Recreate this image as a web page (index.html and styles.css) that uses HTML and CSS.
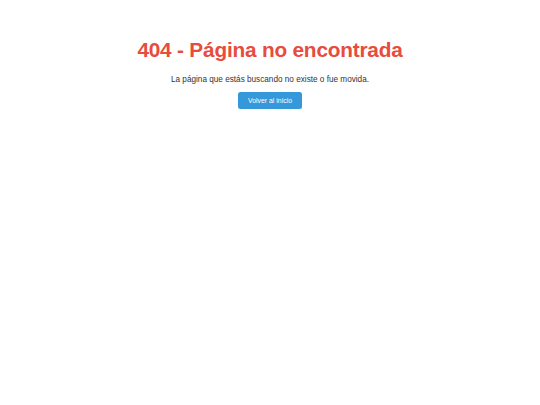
FILE: index.html
```html
<!DOCTYPE html>
<html lang="es">
<head>
<meta charset="utf-8">
<title>404 - Página no encontrada</title>
<link rel="stylesheet" href="styles.css">
</head>
<body>
<main class="notfound">
  <h1 class="title">404 - Página no encontrada</h1>
  <p class="message">La página que estás buscando no existe o fue movida.</p>
  <a class="home-btn" href="#">Volver al inicio</a>
</main>
</body>
</html>
```
FILE: styles.css
```css
html, body {
  margin: 0;
  padding: 0;
  background: #ffffff;
}
body {
  font-family: "Liberation Sans", Arial, sans-serif;
  color: #333333;
}
.notfound {
  display: flex;
  flex-direction: column;
  align-items: center;
  padding-top: 37px;
  text-align: center;
}
.title {
  margin: 0;
  font-size: 20.8px;
  line-height: 25px;
  letter-spacing: -0.2px;
  font-weight: bold;
  color: #e74c3c;
}
.message {
  margin: 11.7px 0 0;
  font-size: 8.2px;
  line-height: 11px;
  color: #333333;
}
.home-btn {
  margin-top: 7px;
  display: block;
  padding: 0 10px;
  height: 17px;
  line-height: 17px;
  font-size: 6.9px;
  color: #ffffff;
  background: #3498db;
  border-radius: 2.5px;
  text-decoration: none;
}
```
